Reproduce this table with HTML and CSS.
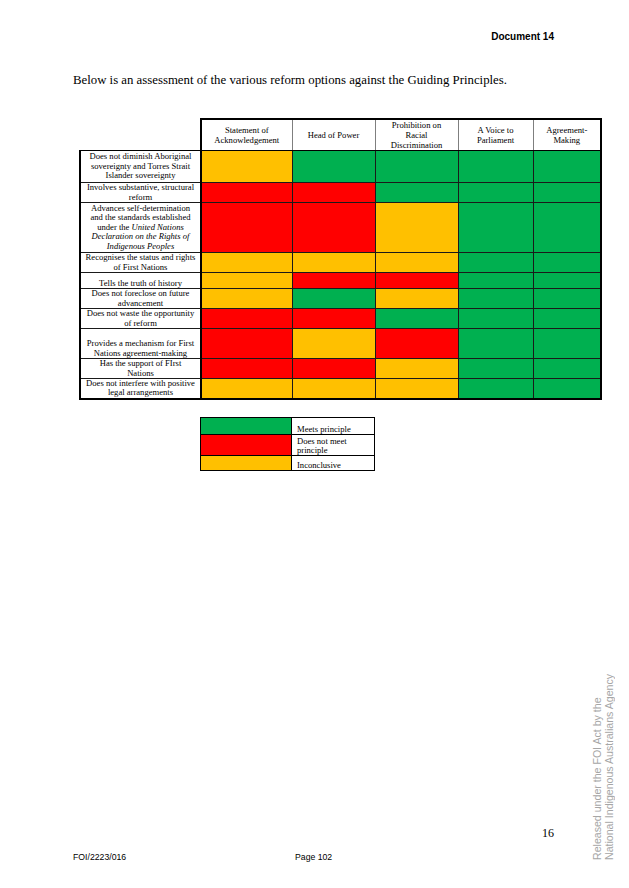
FILE: index.html
```html
<!DOCTYPE html>
<html>
<head>
<meta charset="utf-8">
<link rel="stylesheet" href="styles.css">
</head>
<body>
<div class="page">
  <div class="doc-num">Document 14</div>
  <p class="intro">Below is an assessment of the various reform options against the Guiding Principles.</p>

  <table class="grid">
    <colgroup>
      <col class="c-label"><col class="c-1"><col class="c-2"><col class="c-3"><col class="c-4"><col class="c-5">
    </colgroup>
    <tr class="head">
      <th class="blank"></th>
      <th>Statement of<br>Acknowledgement</th>
      <th>Head of Power</th>
      <th class="top">Prohibition on<br>Racial<br>Discrimination</th>
      <th>A Voice to<br>Parliament</th>
      <th>Agreement-<br>Making</th>
    </tr>
    <tr class="h32"><td class="lbl">Does not diminish Aboriginal<br>sovereignty and Torres Strait<br>Islander sovereignty</td><td class="o"></td><td class="g"></td><td class="g"></td><td class="g"></td><td class="g"></td></tr>
    <tr class="h20"><td class="lbl">Involves substantive, structural<br>reform</td><td class="r"></td><td class="r"></td><td class="g"></td><td class="g"></td><td class="g"></td></tr>
    <tr class="h50"><td class="lbl">Advances self-determination<br>and the standards established<br>under the <i>United Nations<br>Declaration on the Rights of<br>Indigenous Peoples</i></td><td class="r"></td><td class="r"></td><td class="o"></td><td class="g"></td><td class="g"></td></tr>
    <tr class="h20"><td class="lbl">Recognises the status and rights<br>of First Nations</td><td class="o"></td><td class="o"></td><td class="o"></td><td class="g"></td><td class="g"></td></tr>
    <tr class="h16"><td class="lbl bot">Tells the truth of history</td><td class="o"></td><td class="r"></td><td class="r"></td><td class="g"></td><td class="g"></td></tr>
    <tr class="h20"><td class="lbl">Does not foreclose on future<br>advancement</td><td class="o"></td><td class="g"></td><td class="o"></td><td class="g"></td><td class="g"></td></tr>
    <tr class="h20"><td class="lbl">Does not waste the opportunity<br>of reform</td><td class="r"></td><td class="r"></td><td class="g"></td><td class="g"></td><td class="g"></td></tr>
    <tr class="h30"><td class="lbl bot">Provides a mechanism for First<br>Nations agreement-making</td><td class="r"></td><td class="o"></td><td class="r"></td><td class="g"></td><td class="g"></td></tr>
    <tr class="h20"><td class="lbl">Has the support of FIrst<br>Nations</td><td class="r"></td><td class="r"></td><td class="o"></td><td class="g"></td><td class="g"></td></tr>
    <tr class="h20"><td class="lbl">Does not interfere with positive<br>legal arrangements</td><td class="o"></td><td class="o"></td><td class="o"></td><td class="g"></td><td class="g"></td></tr>
  </table>

  <table class="legend">
    <colgroup><col class="c-1"><col class="c-2"></colgroup>
    <tr class="l17"><td class="g"></td><td class="key">Meets principle</td></tr>
    <tr class="l21"><td class="r"></td><td class="key">Does not meet<br>principle</td></tr>
    <tr class="l15"><td class="o"></td><td class="key">Inconclusive</td></tr>
  </table>

  <div class="spacer"></div>
  <div class="page-num">16</div>
  <div class="footer">
    <span class="foi">FOI/2223/016</span>
    <span class="pg">Page 102</span>
  </div>

  <div class="watermark">Released under the FOI Act by the<br>National Indigenous Australians Agency</div>
</div>
</body>
</html>
```

FILE: styles.css
```css
html, body {
  margin: 0;
  padding: 0;
  background: #ffffff;
}

.page {
  position: relative;
  width: 629px;
  height: 888px;
  display: flex;
  flex-direction: column;
  font-family: "Liberation Serif", "Times New Roman", serif;
  color: #000;
  overflow: hidden;
}

.doc-num {
  font-family: "Liberation Sans", Arial, sans-serif;
  font-weight: bold;
  font-size: 10px;
  line-height: 12px;
  text-align: right;
  padding: 31px 75px 0 0;
}

.intro {
  margin: 30px 0 0 73px;
  font-size: 12.8px;
  line-height: 14px;
}

.grid {
  margin: 31px 0 0 79px;
  border-collapse: collapse;
  table-layout: fixed;
  width: 521px;
  font-size: 8.6px;
  line-height: 9.4px;
}

.c-label { width: 121px; }
.c-1 { width: 91px; }
.c-2 { width: 83px; }
.c-3 { width: 83px; }
.c-4 { width: 75px; }
.c-5 { width: 68px; }

.grid th,
.grid td {
  padding: 0;
  border: 1px solid #1a1a1a;
  text-align: center;
  vertical-align: middle;
}

.grid th {
  font-weight: normal;
  height: 29px;
  line-height: 10px;
  border-color: #7f7f7f;
  border-top: 2px solid #000;
  border-bottom: 1px solid #000;
  white-space: nowrap;
}

.grid th:first-of-type + th { border-left: 2px solid #000; }
.grid th:last-child { border-right: 2px solid #000; }

.grid th.top { vertical-align: top; padding-top: 0; }

.grid th.blank {
  border: none;
  border-right: 2px solid #000;
  border-bottom: 1px solid #000;
}

.grid .lbl {
  padding: 0;
  white-space: nowrap;
  border-left: 2px solid #000;
  border-right: 2px solid #000;
}

.grid td:last-child { border-right: 2px solid #000; }
.grid tr:last-child td { border-bottom: 2px solid #000; }

.grid .lbl.bot { vertical-align: bottom; }

.h16 { height: 16px; }
.h20 { height: 20px; }
.h30 { height: 30px; }
.h32 { height: 32px; }
.h50 { height: 50px; }

.g { background: #00b050; }
.r { background: #ff0000; }
.o { background: #ffc000; }

.legend {
  margin: 17px 0 0 200px;
  border-collapse: collapse;
  table-layout: fixed;
  width: 174px;
  font-size: 8.6px;
  line-height: 9px;
  border: 1.5px solid #000;
}

.legend td {
  padding: 0;
  border: 1px solid #000;
}

.legend .key {
  padding-left: 5px;
  vertical-align: bottom;
  text-align: left;
}

.l17 { height: 17px; }
.l21 { height: 21px; }
.l15 { height: 15px; }

.spacer { flex: 1; }

.page-num {
  font-size: 12px;
  line-height: 14px;
  text-align: right;
  padding-right: 75px;
}

.footer {
  display: flex;
  margin-top: 12px;
  padding: 0 0 26px 73px;
  font-family: "Liberation Sans", Arial, sans-serif;
  font-size: 8.7px;
  line-height: 10px;
}

.foi { width: 222px; }

.watermark {
  position: absolute;
  left: 591px;
  top: 660px;
  height: 200px;
  writing-mode: vertical-rl;
  transform: rotate(180deg);
  font-family: "Liberation Sans", Arial, sans-serif;
  font-size: 10.6px;
  line-height: 12px;
  color: #a6a6a6;
  white-space: nowrap;
}
```
